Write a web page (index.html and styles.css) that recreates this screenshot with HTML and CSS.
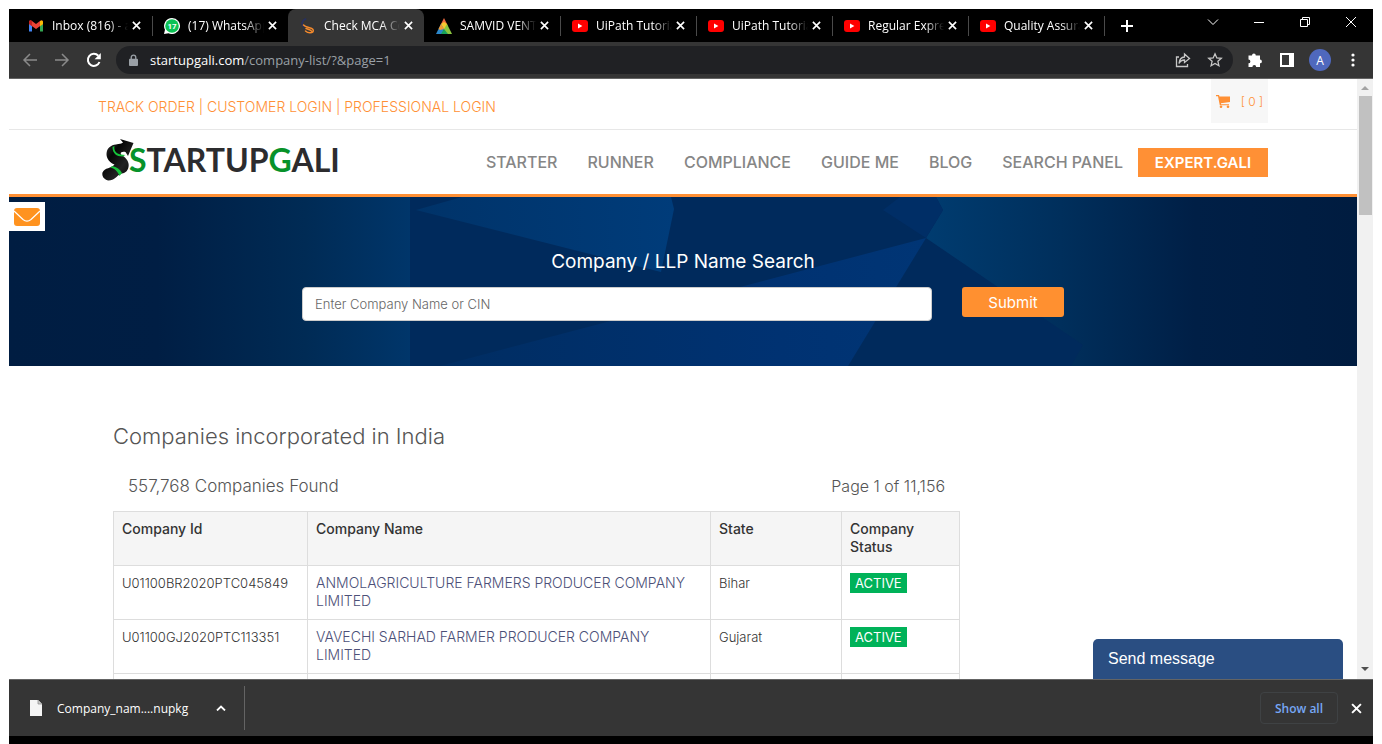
FILE: index.html
```html
<!DOCTYPE html>
<html lang="en">
<head>
<meta charset="utf-8">
<title>Check MCA Company</title>
<link rel="stylesheet" href="styles.css">
</head>
<body>
<svg class="defs" aria-hidden="true">
  <symbol id="x" viewBox="0 0 10 10"><path d="M1 1l8 8M9 1l-8 8" fill="none" stroke="currentColor" stroke-width="1.800"/></symbol>
  <symbol id="yt" viewBox="0 0 16 16"><rect y="2" width="16" height="12" rx="3" fill="#f00"/><path d="M6 5.400v5.200L10.400 8z" fill="#fff"/></symbol>
</svg>
<div class="browser">
  <header class="tabs">
    <div class="tab">
      <svg class="fav" viewBox="0 0 16 16"><path d="M1 3.500v10h3V8z" fill="#4285f4"/><path d="M15 3.500v10h-3V8z" fill="#34a853"/><path d="M1 6V4c0-1.800 1.800-2 3-1l4 3 4-3c1.200-1 3-.8 3 1v2L8 11z" fill="#ea4335"/><path d="M12 3c1.200-1 3-.8 3 1v2l-3 2.200z" fill="#fbbc04"/><path d="M1 4c0-1.500 1.500-2 2.400-1.400L4 3v5L1 6z" fill="#c5221f"/></svg>
      <span class="tab-title">Inbox (816) - a</span><button class="close" aria-label="Close tab"><svg><use href="#x"/></svg></button>
    </div>
    <div class="tab no-line">
      <svg class="fav" viewBox="0 0 16 16"><path d="M8 0a8 8 0 1 1-3.500 15.200L0 16l1-4.200A8 8 0 0 1 8 0z" fill="#fff"/><circle cx="8" cy="8" r="6.800" fill="#0bc254"/><text x="8" y="11" text-anchor="middle" font-family="Roboto, sans-serif" font-weight="700" font-size="8" fill="#fff">17</text></svg>
      <span class="tab-title">(17) WhatsApp</span><button class="close" aria-label="Close tab"><svg><use href="#x"/></svg></button>
    </div>
    <div class="tab active no-line">
      <svg class="fav" viewBox="0 0 16 16" fill="none" stroke-linecap="round"><path d="M5.500 1C1 3.500 1.500 7 4 8.500" stroke="#27305f" stroke-width="1.800"/><path d="M3.500 7c2.500 2.800 8 2.200 9.500 4.500 1 2-.5 3.300-3 3.300-2 0-3.500-.8-4.500-1.800M6 10.500c2.500 1 4.500 1.200 5.500 2.600" stroke="#f58a2c" stroke-width="1.500"/></svg>
      <span class="tab-title">Check MCA Co</span><button class="close" aria-label="Close tab"><svg><use href="#x"/></svg></button>
    </div>
    <div class="tab">
      <svg class="fav" viewBox="0 0 16 16"><path d="M8 0l3 6-3 4-3-4z" fill="#ef6a3f"/><path d="M5 6l3-2 3 2 1 4-4 2-4-2z" fill="#f8c92e"/><path d="M5 6L0 16h6l2-5z" fill="#2b86c9"/><path d="M5 6l3 5-4 1-1.500-1z" fill="#f39a32"/><path d="M11 6l5 10h-6l-2-5z" fill="#8cc63f"/><path d="M5 16l3-5 4 5z" fill="#19a35b"/></svg>
      <span class="tab-title">SAMVID VENT</span><button class="close" aria-label="Close tab"><svg><use href="#x"/></svg></button>
    </div>
    <div class="tab"><svg class="fav"><use href="#yt"/></svg><span class="tab-title">UiPath Tutoria</span><button class="close" aria-label="Close tab"><svg><use href="#x"/></svg></button></div>
    <div class="tab"><svg class="fav"><use href="#yt"/></svg><span class="tab-title">UiPath Tutoria</span><button class="close" aria-label="Close tab"><svg><use href="#x"/></svg></button></div>
    <div class="tab"><svg class="fav"><use href="#yt"/></svg><span class="tab-title">Regular Expre</span><button class="close" aria-label="Close tab"><svg><use href="#x"/></svg></button></div>
    <div class="tab"><svg class="fav"><use href="#yt"/></svg><span class="tab-title">Quality Assura</span><button class="close" aria-label="Close tab"><svg><use href="#x"/></svg></button></div>
    <button class="new-tab" aria-label="New tab"><svg viewBox="0 0 12 12"><path d="M6 0v12M0 6h12" stroke="#fff" stroke-width="2"/></svg></button>
    <div class="window-controls">
      <button aria-label="Search tabs"><svg viewBox="0 0 12 12"><path d="M1 3.500l5 5 5-5"/></svg></button>
      <button aria-label="Minimize"><svg viewBox="0 0 12 12"><path d="M1 6.500h10"/></svg></button>
      <button aria-label="Restore"><svg viewBox="0 0 12 12"><path d="M1.500 3.500h7v7h-7zM3.500 3.500v-2h7v7h-2"/></svg></button>
      <button aria-label="Close window"><svg viewBox="0 0 12 12"><path d="M1 1l10 10M11 1L1 11"/></svg></button>
    </div>
  </header>

  <div class="toolbar">
    <button class="tool dim" aria-label="Back"><svg viewBox="0 0 16 16"><path d="M15 8H2M8 2L2 8l6 6"/></svg></button>
    <button class="tool dim" aria-label="Forward"><svg viewBox="0 0 16 16"><path d="M1 8h13M8 2l6 6-6 6"/></svg></button>
    <button class="tool" aria-label="Reload"><svg viewBox="0 0 16 16"><path d="M13.500 10A6 6 0 1 1 12.300 3.800" stroke-width="2"/><path d="M14.800 1v6.200H8.600z" fill="#fff" stroke="none"/></svg></button>
    <div class="address">
      <svg class="lock" viewBox="0 0 10 14"><rect y="5" width="10" height="8" rx="1" fill="#9aa0a6"/><path d="M2.500 5.500V3.500a2.500 2.500 0 0 1 5 0v2" fill="none" stroke="#9aa0a6" stroke-width="1.500"/></svg>
      <span class="url"><b>startupgali.com</b>/company-list/?&amp;page=1</span>
      <button class="tool light" aria-label="Share"><svg viewBox="0 0 16 16"><path d="M4 5H1.500v9.500h11V12M9.500 5V2l5 4.500-5 4V8C6.500 8 5 9.500 4 11.500 4.300 8 6 5.300 9.500 5z"/></svg></button>
      <button class="tool light" aria-label="Bookmark"><svg viewBox="0 0 16 16"><path d="M8 1.800l1.800 4.100 4.500.4-3.400 3 1 4.400L8 11.400l-3.900 2.300 1-4.400-3.400-3 4.500-.4z"/></svg></button>
    </div>
    <button class="tool ext" aria-label="Extensions"><svg viewBox="0 0 16 16"><path d="M5 3.500a1.900 1.900 0 0 1 3.800 0H13v4a1.900 1.900 0 0 1 0 3.800V15H9.200a1.900 1.900 0 0 0-3.800 0H1.500v-3.700a1.900 1.900 0 0 0 0-3.800v-4z" fill="#fff" stroke="none"/></svg></button>
    <button class="tool" aria-label="Side panel"><svg viewBox="0 0 16 16"><path d="M2 2h9v12H2z" stroke-width="2"/><path d="M10 1h5v14h-5z" fill="#fff" stroke="none"/></svg></button>
    <button class="avatar">A</button>
    <button class="tool" aria-label="Menu"><svg viewBox="0 0 16 16"><g fill="#fff" stroke="none"><circle cx="8" cy="3" r="1.600"/><circle cx="8" cy="8" r="1.600"/><circle cx="8" cy="13" r="1.600"/></g></svg></button>
  </div>

  <div class="viewport">
    <main class="page">
      <div class="topbar">
        <div class="container">
          <div class="account"><a href="#">TRACK ORDER</a> | <a href="#">CUSTOMER LOGIN</a> | <a href="#">PROFESSIONAL LOGIN</a></div>
          <a class="cart" href="#"><svg viewBox="0 0 15 13"><path d="M0 0h3l.5 1.500H14V7L5 8.200V9.200h8v1H3.800L2 1.200H0z" fill="currentColor"/><circle cx="5" cy="11.700" r="1.300" fill="currentColor"/><circle cx="12" cy="11.700" r="1.300" fill="currentColor"/></svg><span>[ 0 ]</span></a>
        </div>
      </div>
      <div class="masthead">
        <div class="container">
          <a class="logo" href="#">
            <svg viewBox="0 0 32 42"><defs><linearGradient id="ink" x1="0" y1="0" x2="1" y2="1"><stop offset="0" stop-color="#444"/><stop offset=".35" stop-color="#050505"/><stop offset=".65" stop-color="#222"/><stop offset="1" stop-color="#000"/></linearGradient></defs>
              <path d="M18 0l13.500 4L26 17l-2.500-4c-4-1-6 1-4 3 5 3 8 7 7 12-1 5-4 6-8 7-4 2-6 6.500-12 6.500-4-.5-7-4-6-8 2-5 9-4 12-8-5-2-8-6-8-10.500C4.500 9 9 6 14 5.500c3-.5 6-1 7-2z" fill="url(#ink)"/>
              <path d="M12.500 7c-1 5 2 7.500 6 8.500l5 .5-3 1.500c-6 0-10-3-10-9.500zM10 27c5 1 8 3.500 10 7l-2.500 3c-2-5-5-7.500-9-8.500z" fill="#16c23a"/></svg>
            <span><i>S</i>TARTUP<i>G</i>ALI</span>
          </a>
          <nav>
            <a href="#">STARTER</a><a href="#">RUNNER</a><a href="#">COMPLIANCE</a><a href="#">GUIDE ME</a><a href="#">BLOG</a><a href="#">SEARCH PANEL</a><a class="expert" href="#">EXPERT.GALI</a>
          </nav>
        </div>
      </div>
      <section class="hero">
        <svg class="hero-art" viewBox="0 0 1348 169" preserveAspectRatio="none" aria-hidden="true">
          <defs>
            <linearGradient id="base"><stop offset="0" stop-color="#001d42"/><stop offset=".11" stop-color="#001e44"/><stop offset=".22" stop-color="#002b55"/><stop offset=".3" stop-color="#00366b"/><stop offset=".68" stop-color="#003c70"/><stop offset=".78" stop-color="#002f5c"/><stop offset=".88" stop-color="#001f46"/><stop offset="1" stop-color="#001c40"/></linearGradient>
            <linearGradient id="facet"><stop offset="0" stop-color="#002d62"/><stop offset=".7" stop-color="#003272"/><stop offset="1" stop-color="#003575"/></linearGradient>
            <linearGradient id="top"><stop offset="0" stop-color="#003369"/><stop offset="1" stop-color="#003c7a"/></linearGradient>
          </defs>
          <path d="M0 0h1348v169H0z" fill="url(#base)"/>
          <path d="M401 0h526l7 13-17 28 157 107-12 21H401z" fill="#002a5c"/>
          <path d="M407 13L453 0h209l3 12-13 63z" fill="url(#top)"/>
          <path d="M874 13l17-13h36l7 13-17 28z" fill="#002e66"/>
          <path d="M917 41L431 169h408z" fill="url(#facet)"/>
        </svg>
        <h1>Company / LLP Name Search</h1>
        <form class="search">
          <input type="text" aria-label="Company name or CIN" placeholder="Enter Company Name or CIN">
          <button type="button">Submit</button>
        </form>
        <button class="mail" aria-label="Contact us"><svg viewBox="0 0 28 20"><rect x="1" y="1" width="26" height="18" rx="3" fill="#ff9320"/><path d="M1 4l9 8.500c3 2.500 5 2.500 8 0L27 4" fill="none" stroke="#fff" stroke-width="1.200"/></svg></button>
      </section>
      <section class="results">
        <h2>Companies incorporated in India</h2>
        <div class="summary"><span class="count">557,768 Companies Found</span><span>Page 1 of 11,156</span></div>
        <table>
          <colgroup><col class="c-id"><col class="c-name"><col class="c-state"><col class="c-status"></colgroup>
          <thead><tr><th>Company Id</th><th>Company Name</th><th>State</th><th>Company Status</th></tr></thead>
          <tbody>
            <tr><td>U01100BR2020PTC045849</td><td class="name"><a href="#">ANMOLAGRICULTURE FARMERS PRODUCER COMPANY LIMITED</a></td><td>Bihar</td><td><span class="badge">ACTIVE</span></td></tr>
            <tr><td>U01100GJ2020PTC113351</td><td class="name"><a href="#">VAVECHI SARHAD FARMER PRODUCER COMPANY LIMITED</a></td><td>Gujarat</td><td><span class="badge">ACTIVE</span></td></tr>
            <tr><td></td><td></td><td></td><td></td></tr>
          </tbody>
        </table>
      </section>
    </main>
    <div class="scrollbar" aria-hidden="true">
      <svg viewBox="0 0 8 4"><path d="M0 4l4-4 4 4z" fill="#a3a3a3"/></svg>
      <div class="thumb"></div>
      <svg viewBox="0 0 8 4"><path d="M0 0l4 4 4-4z" fill="#505050"/></svg>
    </div>
    <button class="chat">Send message</button>
  </div>

  <footer class="downloads">
    <button class="file">
      <svg class="doc" viewBox="0 0 12 16"><path d="M0 0h8l4 4v12H0z" fill="#f5f5f5"/><path d="M8 0v4h4" fill="#ccc" stroke="#888" stroke-width=".7"/></svg>
      <span>Company_nam....nupkg</span>
      <svg class="up" viewBox="0 0 10 6"><path d="M1 5.500l4-4 4 4" fill="none" stroke="#fff" stroke-width="1.800"/></svg>
    </button>
    <button class="show-all">Show all</button>
    <button class="close big" aria-label="Close downloads"><svg><use href="#x"/></svg></button>
  </footer>
</div>
</body>
</html>
```

FILE: styles.css
```css
* { box-sizing: border-box; }
body { margin: 0; background: #fff; font-family: Inter, sans-serif; }
button { border: 0; margin: 0; padding: 0; background: none; color: inherit; font: inherit; }
a { color: inherit; text-decoration: none; }
svg { display: block; }
.defs { position: absolute; width: 0; height: 0; }

.browser { height: 100vh; padding: 9px 9px 0; display: flex; flex-direction: column; overflow: hidden; }
.tabs, .toolbar, .downloads { font-family: "Open Sans", sans-serif; color: #fff; display: flex; align-items: center; flex: none; }

/* Tab strip */
.tabs { height: 33px; background: #000; padding-left: 7px; font-size: 12px; }
.tab { flex: 0 1 136px; min-width: 0; height: 33px; padding: 0 8px 0 12px; display: flex; align-items: center; position: relative; }
.tab::after { content: ""; position: absolute; right: -1px; top: 7px; width: 1px; height: 20px; background: #4a4a4a; }
.no-line::after { display: none; }
.active { background: #353535; border-radius: 8px 8px 0 0; }
.fav { width: 16px; height: 16px; flex: none; }
.tab-title { flex: 1; margin-left: 8px; overflow: hidden; white-space: nowrap; mask-image: linear-gradient(90deg, #000 75%, transparent); }
.close { width: 16px; height: 18px; flex: none; display: grid; place-items: center; }
.close svg { width: 9px; height: 9px; }
.big svg { width: 11px; height: 11px; }
.new-tab { margin-left: 17px; }
.new-tab svg { width: 12px; height: 12px; }
.window-controls { margin-left: auto; padding: 0 16px 8px 0; display: flex; gap: 34px; }
.window-controls svg { width: 12px; height: 12px; fill: none; stroke: #fff; stroke-width: 1; }

/* Toolbar */
.toolbar { height: 37px; background: #353535; border-bottom: 1px solid #646464; padding: 0 12px 0 13px; gap: 16px; }
.tool svg { width: 16px; height: 16px; fill: none; stroke: #fff; stroke-width: 2; }
.dim svg { stroke: #8a8a8a; stroke-width: 1.5; }
.light svg { stroke: #c8c8c8; stroke-width: 1.3; }
.address { flex: 1; height: 28px; border-radius: 14px; background: #202124; display: flex; align-items: center; gap: 16px; padding: 0 10px 0 13px; margin: 0 -2px; }
.lock { width: 9px; height: 13px; }
.url { flex: 1; font-size: 13px; color: #9aa0a6; margin-left: -4px; }
.url b { font-weight: 400; color: #fff; }
.avatar { width: 22px; height: 22px; border-radius: 50%; background: #4f68bd; font-size: 12px; margin: 0 -2px; }

/* Web page */
.viewport { flex: 1; min-height: 0; display: flex; position: relative; }
.page { flex: 1; min-width: 0; overflow: hidden; }
.container { max-width: 1170px; margin: 0 auto; display: flex; justify-content: space-between; }
.topbar { border-bottom: 1px solid #e7e7e7; color: #ff9035; font-size: 14px; font-weight: 300; }
.topbar .container { height: 50px; }
.account { padding-top: 18px; line-height: 20px; }
.cart { width: 57px; height: 44px; background: #f7f7f7; display: flex; align-items: center; justify-content: center; gap: 10px; font-size: 12px; }
.cart svg { width: 15px; height: 13px; }
.masthead { border-bottom: 3px solid #ff9035; }
.masthead .container { height: 64px; align-items: center; }
.logo { display: flex; align-items: center; padding: 0 0 4px 4px; color: #2c2c2e; font: 700 32px/42px Lato, sans-serif; }
.logo svg { width: 32px; height: 42px; margin-right: -5px; }
.logo i { font-style: normal; color: #07922a; }
nav { display: flex; align-items: center; gap: 30px; color: #868686; font-size: 16px; font-weight: 500; white-space: nowrap; }
.expert { background: #ff9035; color: #fff; font-size: 15px; font-weight: 600; line-height: 29px; width: 130px; text-align: center; margin-left: -15px; }

.hero { position: relative; height: 169px; padding-top: 53px; color: #fff; isolation: isolate; }
.hero-art { position: absolute; inset: 0; width: 100%; height: 100%; z-index: -1; }
.hero h1 { margin: 0 0 13px; font-size: 19px; line-height: 24px; font-weight: 400; text-align: center; }
.search { max-width: 762px; margin: 0 auto; display: flex; gap: 30px; align-items: flex-start; }
.search input { flex: 1; min-width: 0; height: 34px; padding: 0 12px; border: 1px solid #ccc; border-radius: 4px; font: 300 13px Inter, sans-serif; }
.search input::placeholder { color: #666; }
.search button { width: 102px; height: 30px; border-radius: 3px; background: #ff9030; font-size: 15px; }
.mail { position: absolute; left: 0; top: 5px; width: 36px; height: 29px; background: #fff; display: grid; place-items: center; }
.mail svg { width: 28px; height: 20px; }

.results { max-width: 1140px; margin: 0 auto; padding-top: 56px; color: #555; font-weight: 300; }
.results h2 { margin: 0 0 22px; font-size: 22px; line-height: 28px; font-weight: 300; }
.summary { max-width: 847px; padding: 0 15px; display: flex; justify-content: space-between; font-size: 16px; line-height: 28px; margin-bottom: 11px; }
.count { font-size: 17px; }
table { width: 847px; max-width: 100%; table-layout: fixed; border-collapse: collapse; font-size: 13px; line-height: 18px; }
.c-id { width: 194px; } .c-name { width: 403px; } .c-state { width: 131px; }
th, td { border: 1px solid #ddd; padding: 8px; text-align: left; vertical-align: top; height: 54px; }
th { background: #f5f5f5; color: #333; font-size: 14px; font-weight: 500; }
td { color: #333; }
.name { font-size: 14px; }
td a { color: #4c5078; }
.badge { background: #00b259; color: #fff; padding: 2px 5px; font-weight: 400; }

.scrollbar { width: 16px; flex: none; background: #f1f1f1; display: flex; flex-direction: column; align-items: center; padding: 7px 0 8px; }
.scrollbar svg { width: 8px; height: 4px; flex: none; }
.thumb { width: 13px; height: 119px; margin: 6px 0 auto; background: #c1c1c1; }
.chat { position: absolute; right: 30px; bottom: 0; width: 250px; height: 40px; padding-left: 15px; border-radius: 5px 5px 0 0; background: #2a4e82; color: #fff; font: 16px "Liberation Sans", sans-serif; text-align: left; }

/* Download shelf */
.downloads { height: 65px; background: #353535; border-top: 1px solid #646464; border-bottom: 8px solid #000; padding-right: 9px; font-size: 12px; }
.file { height: 44px; display: flex; align-items: center; padding: 0 18px 0 21px; border-right: 1px solid #646464; }
.doc { width: 12px; height: 16px; margin-right: 15px; }
.up { width: 10px; height: 6px; margin-left: 28px; }
.show-all { margin-left: auto; margin-right: 10px; width: 78px; height: 32px; border: 1px solid #3f4244; border-radius: 4px; color: #77a7f4; font-size: 12px; font-weight: 600; }
```
